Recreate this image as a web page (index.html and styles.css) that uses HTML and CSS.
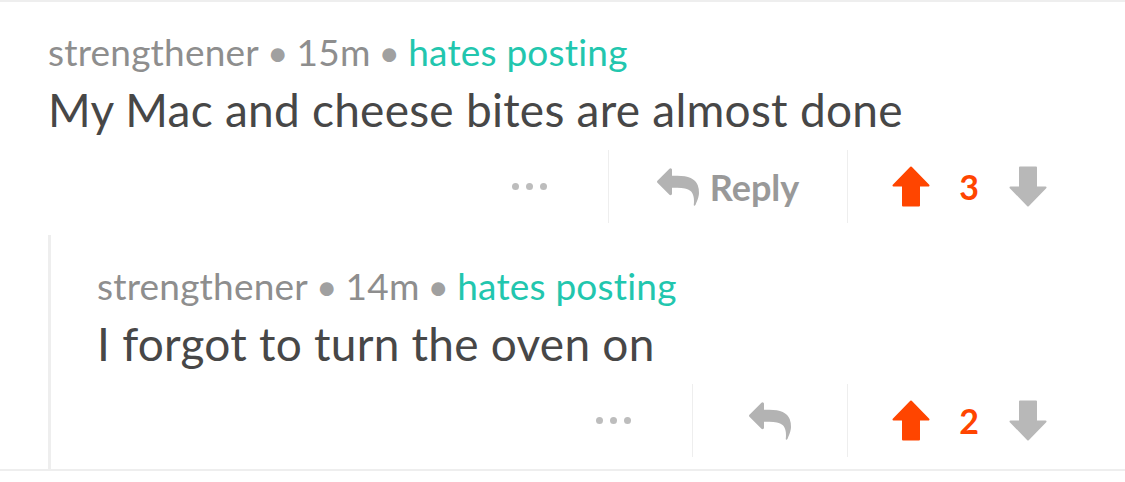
FILE: index.html
```html
<!DOCTYPE html>
<html>
<head>
<meta charset="utf-8">
<link rel="stylesheet" href="styles.css">
</head>
<body>
<div class="thread">
  <div class="comment">
    <div class="meta"><span class="author">strengthener</span><span class="sep">•</span><span class="age">15m</span><span class="sep">•</span><span class="flair">hates posting</span></div>
    <div class="body">My Mac and cheese bites are almost done</div>
    <div class="actions">
      <div class="act more more-top"><span class="dot"></span><span class="dot"></span><span class="dot"></span></div>
      <div class="act reply reply-top">
        <svg class="reply-icon" viewBox="0 64 1792 1600"><path d="M1792 1120q0 166-127 451-3 7-10.5 24t-13.5 30-13 22q-12 17-28 17-15 0-23.5-10t-8.5-25q0-9 2.5-26.5t2.5-23.5q5-68 5-123 0-101-17.5-181t-48.5-138.5-80-101-105.5-69.5-133-42.5-154-21.5-175.5-6h-224v256q0 26-19 45t-45 19-45-19l-512-512q-19-19-19-45t19-45l512-512q19-19 45-19t45 19 19 45v256h224q713 0 875 403 53 134 53 333z"/></svg>
        <span class="reply-label">Reply</span>
      </div>
      <div class="act vote">
        <svg class="arrow up" viewBox="0 0 38 41"><path d="M19 1.5 L36.5 19.5 H27 V39.5 H11 V19.5 H1.5 Z"/></svg>
        <span class="score">3</span>
        <svg class="arrow down" viewBox="0 0 38 41"><path d="M19 39.5 L36.5 21.5 H27 V1.5 H11 V21.5 H1.5 Z"/></svg>
      </div>
    </div>
    <div class="comment nested">
      <div class="meta"><span class="author">strengthener</span><span class="sep">•</span><span class="age">14m</span><span class="sep">•</span><span class="flair">hates posting</span></div>
      <div class="body">I forgot to turn the oven on</div>
      <div class="actions">
        <div class="act more more-sub"><span class="dot"></span><span class="dot"></span><span class="dot"></span></div>
        <div class="act reply reply-sub">
          <svg class="reply-icon" viewBox="0 64 1792 1600"><path d="M1792 1120q0 166-127 451-3 7-10.5 24t-13.5 30-13 22q-12 17-28 17-15 0-23.5-10t-8.5-25q0-9 2.5-26.5t2.5-23.5q5-68 5-123 0-101-17.5-181t-48.5-138.5-80-101-105.5-69.5-133-42.5-154-21.5-175.5-6h-224v256q0 26-19 45t-45 19-45-19l-512-512q-19-19-19-45t19-45l512-512q19-19 45-19t45 19 19 45v256h224q713 0 875 403 53 134 53 333z"/></svg>
        </div>
        <div class="act vote">
          <svg class="arrow up" viewBox="0 0 38 41"><path d="M19 1.5 L36.5 19.5 H27 V39.5 H11 V19.5 H1.5 Z"/></svg>
          <span class="score">2</span>
          <svg class="arrow down" viewBox="0 0 38 41"><path d="M19 39.5 L36.5 21.5 H27 V1.5 H11 V21.5 H1.5 Z"/></svg>
        </div>
      </div>
    </div>
  </div>
</div>
</body>
</html>
```

FILE: styles.css
```css
html, body {
  margin: 0;
  padding: 0;
  background: #ffffff;
}
body {
  font-family: Lato, "Open Sans", sans-serif;
  width: 1125px;
  height: 482px;
  overflow: hidden;
}
.thread {
  border-top: 2px solid #eeeeee;
  border-bottom: 2px solid #eeeeee;
}
.comment {
  padding: 28px 0 0 48px;
}
.nested {
  margin-top: 12px;
  border-left: 3px solid #eeeeee;
  padding: 29px 0 12px 46px;
}
.meta {
  font-size: 37px;
  line-height: 44px;
  color: #8e8e8e;
  white-space: nowrap;
  letter-spacing: 0.2px;
}
.sep {
  color: #a0a0a0;
  margin: 0 8px;
}
.flair {
  color: #22c6ae;
}
.body {
  margin-top: 6px;
  font-size: 46px;
  line-height: 60px;
  color: #474747;
  white-space: nowrap;
  letter-spacing: 0.25px;
}
.actions {
  margin-top: 10px;
  display: flex;
  justify-content: flex-end;
  height: 73px;
  padding-right: 35px;
}
.act {
  display: flex;
  align-items: center;
  justify-content: center;
  height: 100%;
}
.more {
  width: 158px;
  gap: 7px;
}
.dot {
  width: 7px;
  height: 7px;
  border-radius: 50%;
  background: #bdbdbd;
}
.reply {
  border-left: 1px solid #eeeeee;
  border-right: 1px solid #eeeeee;
  gap: 11px;
}
.reply-top { width: 238px; }
.reply-sub { width: 154px; }
.reply-icon {
  width: 42px;
  height: 38px;
  fill: #b3b3b3;
}
.reply-label {
  font-size: 36px;
  font-weight: 700;
  color: #999999;
}
.vote {
  width: 242px;
}
.arrow {
  width: 38px;
  height: 41px;
  stroke-linejoin: round;
  stroke-width: 2;
}
.arrow.up { fill: #ff4500; stroke: #ff4500; }
.arrow.down { fill: #b8b8b8; stroke: #b8b8b8; }
.score {
  width: 79px;
  text-align: center;
  font-size: 34px;
  font-weight: 700;
  color: #ff4500;
}
```
